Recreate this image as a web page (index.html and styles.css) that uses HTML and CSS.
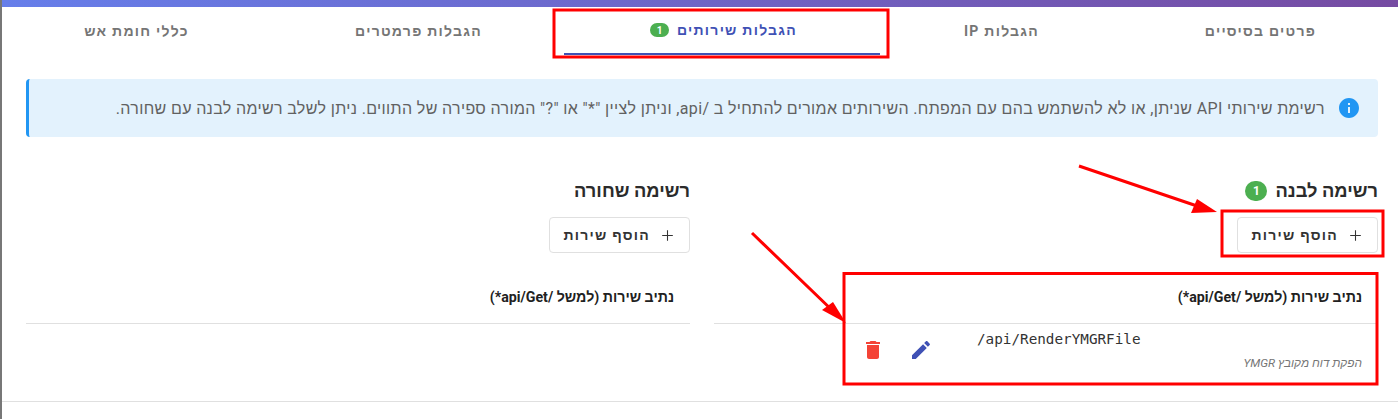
FILE: index.html
```html
<!DOCTYPE html>
<html lang="he" dir="rtl">
<head>
  <meta charset="UTF-8">
  <title>הגבלות שירותים</title>
  <meta name="viewport" content="width=device-width, initial-scale=1.0">
  <link rel="stylesheet" href="styles.css">
</head>
<body>

<div class="topbar"></div>

<!-- TABS -->
<nav class="tabs">
  <a class="tab tab-basic" href="#">פרטים בסיסיים</a>
  <a class="tab tab-ip" href="#">הגבלות IP</a>
  <a class="tab tab-services active" href="#">הגבלות שירותים <span class="badge badge-small">1</span></a>
  <a class="tab tab-params" href="#">הגבלות פרמטרים</a>
  <a class="tab tab-firewall" href="#">כללי חומת אש</a>
</nav>

<div class="content">
  <!-- INFO -->
  <div class="alert">
    <svg class="alert-icon" viewBox="2 2 20 20"><path d="M12 2C6.48 2 2 6.48 2 12s4.48 10 10 10 10-4.48 10-10S17.52 2 12 2zm1 15h-2v-6h2v6zm0-8h-2V7h2v2z"/></svg>
    <p>רשימת שירותי API שניתן, או לא להשתמש בהם עם המפתח. השירותים אמורים להתחיל ב /api, וניתן לציין "*" או "?" המורה ספירה של התווים. ניתן לשלב רשימה לבנה עם שחורה.</p>
  </div>

  <div class="lists">
    <!-- WHITE LIST -->
    <section class="list">
      <h3>רשימה לבנה <span class="badge">1</span></h3>
      <button class="add-btn">
        <svg viewBox="0 0 24 24"><path d="M12 4.5v15M4.5 12h15"/></svg>
        הוסף שירות
      </button>
      <div class="table-head">נתיב שירות (למשל /api/Get*)</div>
      <div class="table-row">
        <div class="path-cell">
          <code>/api/RenderYMGRFile</code>
          <small>הפקת דוח מקובץ YMGR</small>
        </div>
        <div class="actions">
          <svg class="icon-edit" viewBox="0 0 24 24"><path d="M3 17.25V21h3.75L17.81 9.94l-3.75-3.75L3 17.25zM20.71 7.04c.39-.39.39-1.02 0-1.41l-2.34-2.34c-.39-.39-1.02-.39-1.41 0l-1.83 1.83 3.75 3.75 1.83-1.83z"/></svg>
          <svg class="icon-delete" viewBox="0 0 24 24"><path d="M6 19c0 1.1.9 2 2 2h8c1.1 0 2-.9 2-2V7H6v12zM19 4h-3.5l-1-1h-5l-1 1H5v2h14V4z"/></svg>
        </div>
      </div>
    </section>

    <!-- BLACK LIST -->
    <section class="list">
      <h3>רשימה שחורה</h3>
      <button class="add-btn">
        <svg viewBox="0 0 24 24"><path d="M12 4.5v15M4.5 12h15"/></svg>
        הוסף שירות
      </button>
      <div class="table-head">נתיב שירות (למשל /api/Get*)</div>
    </section>
  </div>
</div>

<!-- RED MARKS DRAWN OVER THE SCREENSHOT -->
<svg class="marks" viewBox="0 0 1398 419">
  <g fill="none" stroke="#f00" stroke-width="3">
    <rect x="554" y="10" width="334" height="47"/>
    <rect x="1222" y="211" width="161" height="45"/>
    <rect x="844" y="273.5" width="533" height="110.5"/>
    <path d="M1079 166L1200 207M752 233L835 313"/>
  </g>
  <g fill="#f00">
    <path d="M1217 212L1197 199L1191 213Z"/>
    <path d="M846 323L833 302L822 310Z"/>
  </g>
</svg>

</body>
</html>
```

FILE: styles.css
```css
body {
  margin: 0;
  position: relative;
  height: 419px;
  overflow: hidden;
  background: #fff;
  color: #212121;
  font-family: Roboto, "Liberation Sans", Arial, sans-serif;
}

/* thin edge of the window behind the page */
body::before {
  content: "";
  position: absolute;
  top: 0;
  bottom: 0;
  left: 0;
  width: 2px;
  background: #777;
}

.topbar {
  height: 7px;
  background: linear-gradient(90deg, #667eea, #764ba2);
}

.tabs {
  display: flex;
  height: 48px;
}

.tab {
  box-sizing: border-box;
  display: flex;
  align-items: center;
  justify-content: center;
  gap: 8px;
  height: 48px;
  padding-left: 3px;
  font-size: 14px;
  font-weight: 700;
  letter-spacing: 1.25px;
  color: #757575;
  text-decoration: none;
}

.tab-basic { width: 278px; }
.tab-ip { width: 240px; }
.tab-services { width: 316px; }
.tab-params { width: 294px; }
.tab-firewall { width: 270px; }

.tab.active {
  color: #3f51b5;
  border-bottom: 2px solid #3f51b5;
}

.badge {
  display: inline-flex;
  align-items: center;
  justify-content: center;
  width: 22px;
  height: 20px;
  border-radius: 10px;
  background: #4caf50;
  color: #fff;
  font-size: 12px;
  font-weight: 700;
  letter-spacing: 0;
}

.badge-small {
  width: 19px;
  height: 14px;
  font-size: 10px;
}

.content {
  height: 347px;
  box-sizing: border-box;
  padding: 24px 20px 0 26px;
  border-bottom: 1px solid #e0e0e0;
}

.alert {
  display: flex;
  align-items: center;
  gap: 14px;
  height: 58px;
  box-sizing: border-box;
  padding: 0 19px 0 16px;
  background: #e3f2fd;
  border-left: 3px solid #2196f3;
  border-radius: 4px;
  color: #616161;
  font-size: 16px;
  letter-spacing: .35px;
}

.alert p { margin: 0; }

.alert-icon {
  width: 20px;
  height: 20px;
  flex: none;
  fill: #2196f3;
}

.lists {
  display: flex;
  gap: 24px;
  margin-top: 43px;
}

.list {
  flex: 1;
  min-width: 0;
}

.list h3 {
  display: flex;
  align-items: center;
  gap: 8px;
  height: 22px;
  margin: 0 0 15px;
  font-size: 18.3px;
  font-weight: 700;
  color: #2b2b2b;
}

.add-btn {
  display: flex;
  align-items: center;
  gap: 9px;
  height: 36px;
  padding: 0 13px;
  background: #fff;
  border: 1px solid #e0e0e0;
  border-radius: 4px;
  color: #333;
  font-family: inherit;
  font-size: 14px;
  font-weight: 700;
  letter-spacing: 1.25px;
}

.add-btn svg {
  width: 17px;
  height: 17px;
  fill: none;
  stroke: #333;
  stroke-width: 1.5;
}

.table-head {
  height: 71px;
  box-sizing: border-box;
  padding: 36px 16px 0 0;
  border-bottom: 1px solid #e0e0e0;
  font-size: 14.2px;
  font-weight: 700;
}

.table-row {
  display: flex;
  height: 76px;
}

.path-cell {
  display: flex;
  flex-direction: column;
  width: 385px;
  padding: 7px 16px 0 0;
}

.path-cell code {
  direction: ltr;
  text-align: left;
  font-family: "DejaVu Sans Mono", monospace;
  font-size: 14.3px;
  color: #333;
}

.path-cell small {
  margin-top: 9px;
  font-size: 11.8px;
  font-style: italic;
  color: #757575;
}

.actions {
  display: flex;
  align-items: flex-start;
  gap: 24px;
  margin-right: 44px;
  padding-top: 14px;
}

.actions svg {
  width: 24px;
  height: 24px;
}

.icon-edit { fill: #3f51b5; }
.icon-delete { fill: #f44336; }

.marks {
  position: absolute;
  top: 0;
  left: 0;
  width: 1398px;
  height: 419px;
  pointer-events: none;
}
```
